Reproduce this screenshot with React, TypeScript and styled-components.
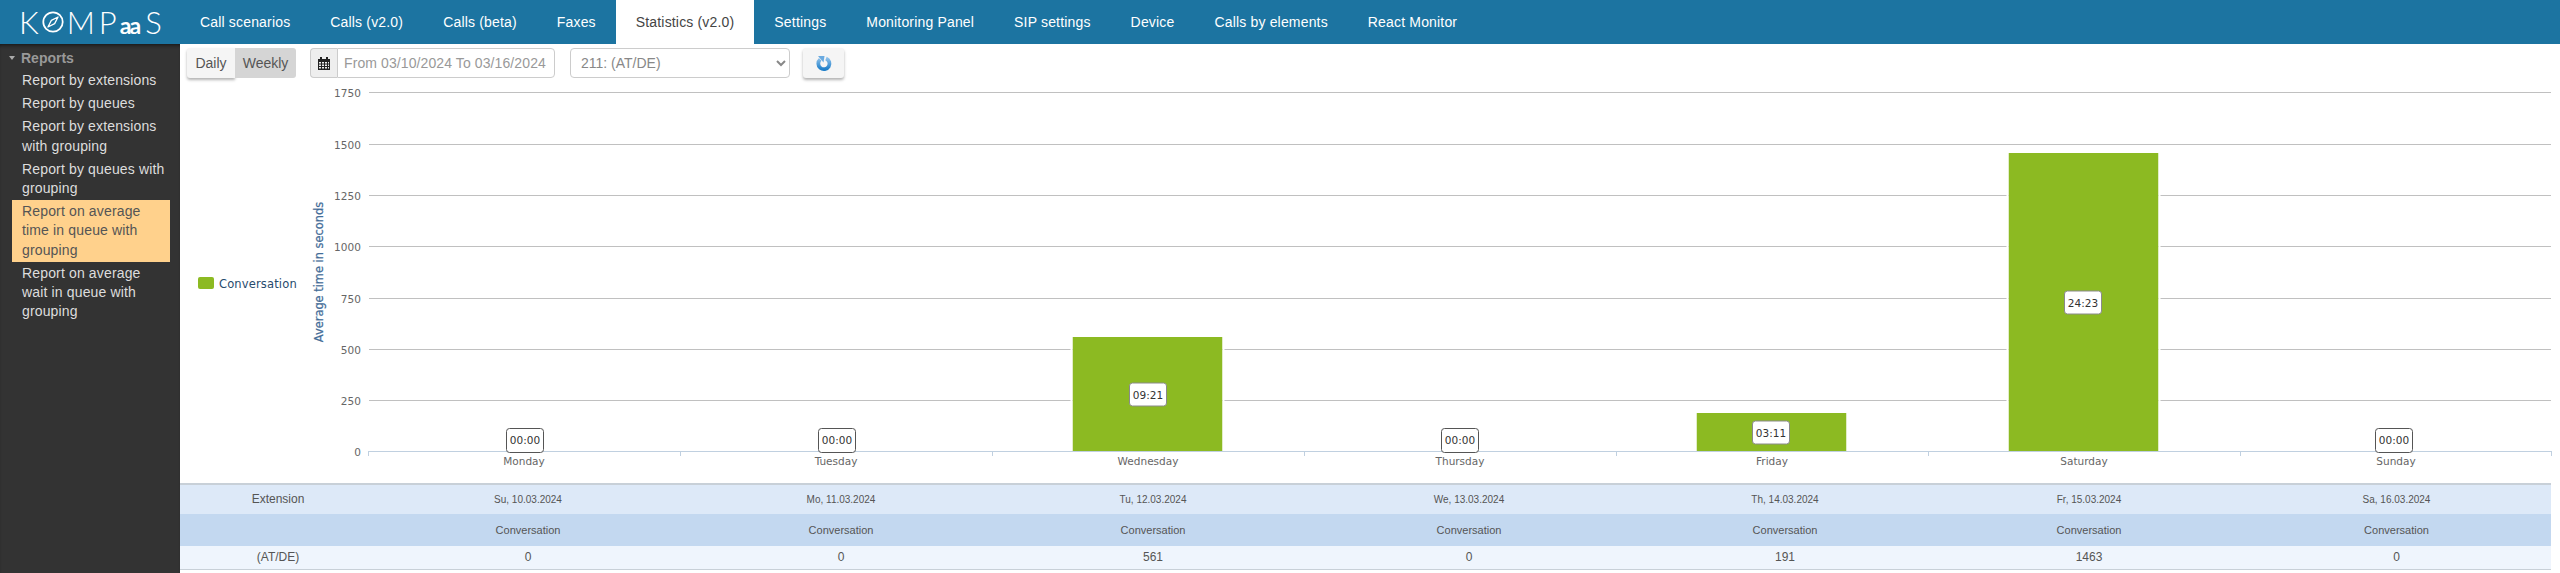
import React from 'react';
import styled, { createGlobalStyle } from 'styled-components';

const Global = createGlobalStyle`
  html, body { margin: 0; padding: 0; height: 100%; background: #fff; overflow: hidden; }
  #root { height: 100%; }
  * { box-sizing: border-box; }
`;

const Page = styled.div`
  display: flex; flex-direction: column; height: 573px; width: 2560px;
  font-family: "Liberation Sans", Arial, sans-serif; font-size: 14px; color: #333;
`;
const Header = styled.header`
  display: flex; height: 44px; flex: none; background: #1c74a1;
`;
const Logo = styled.div`
  width: 180px; flex: none; display: flex; align-items: center; padding-left: 19px;
  font-family: Lato, sans-serif; font-weight: 300; font-size: 31px; color: #fff; line-height: 1;
`;
const LogoLetter = styled.span<{ $gap?: number }>`
  margin-left: ${p => p.$gap ?? 0}px;
`;
const LogoSmall = styled.span<{ $shift?: number }>`
  font-size: 23px; font-weight: 700; margin-left: ${p => p.$shift ?? 0}px; position: relative; top: 3px;
`;
const Nav = styled.nav`display: flex;`;
const Tab = styled.a<{ $active?: boolean }>`
  display: flex; align-items: center; height: 44px; padding: 0 20px;
  font-size: 14px; letter-spacing: .17px;
  color: ${p => (p.$active ? '#444' : '#fff')};
  background: ${p => (p.$active ? '#fff' : 'transparent')};
`;
const Body = styled.div`display: flex; flex: 1; min-height: 0;`;
const Sidebar = styled.aside`
  width: 180px; flex: none; background: #333; padding: 2px 10px 0 12px;
  box-shadow: inset 0 4px 4px -3px #111;
`;
const TreeHead = styled.div`
  display: flex; align-items: center; height: 23px; margin-left: -3px; gap: 6px;
  font-weight: 700; color: #999;
`;
const Caret = styled.span`
  width: 0; height: 0; border-left: 3px solid transparent; border-right: 3px solid transparent;
  border-top: 4px solid #aaa;
`;
const TreeItem = styled.div<{ $active?: boolean }>`
  padding: 2px 2px 2px 10px; line-height: 19.2px; font-size: 14px; letter-spacing: .15px;
  color: ${p => (p.$active ? '#555' : '#ddd')};
  background: ${p => (p.$active ? '#ffd18c' : 'transparent')};
`;
const Main = styled.main`flex: 1; display: flex; flex-direction: column; min-width: 0;`;
const Toolbar = styled.div`
  display: flex; align-items: flex-start; height: 34px; flex: none; padding: 4px 0 0 7px;
`;
const Toggle = styled.button<{ $on?: boolean }>`
  height: 30px; border: 0; padding: 0; font: inherit; color: #555;
  width: ${p => (p.$on ? 61 : 48)}px;
  background: ${p => (p.$on ? '#d5d5d5' : '#f5f5f5')};
  border-radius: ${p => (p.$on ? '0 3px 3px 0' : '3px 0 0 3px')};
  box-shadow: ${p => (p.$on ? 'none' : '0 2px 3px rgba(0,0,0,.3)')};
`;
const DateGroup = styled.div`display: flex; margin-left: 14px;`;
const Addon = styled.span`
  width: 27px; height: 30px; display: flex; align-items: center; justify-content: center;
  background: #eee; border: 1px solid #ccc; border-right: 0; border-radius: 4px 0 0 4px;
`;
const DateInput = styled.input`
  width: 218px; height: 30px; padding: 0 6px; border: 1px solid #ccc; border-radius: 0 4px 4px 0;
  font: 14px "Liberation Sans", Arial, sans-serif; letter-spacing: .1px; outline: none; color: #999;
`;
const Select = styled.select`
  margin-left: 15px; width: 220px; height: 30px; padding: 0 6px; background: #fff;
  border: 1px solid #ccc; border-radius: 4px; color: #888;
  font: 14px "Liberation Sans", Arial, sans-serif;
`;
const RefreshBtn = styled.button`
  margin-left: 13px; width: 41px; height: 30px; border: 0; padding: 0; border-radius: 3px;
  background: #f5f5f5; box-shadow: 0 2px 3px rgba(0,0,0,.3);
  display: flex; align-items: center; justify-content: center;
`;
const Chart = styled.svg`display: block; width: 2380px; height: 405px; flex: none;`;
const AxisNum = styled.text`
  font: 10.5px "DejaVu Sans", Verdana, sans-serif; fill: #666; text-anchor: end; letter-spacing: .1px;
`;
const CatText = styled.text`
  font: 10.5px "DejaVu Sans", Verdana, sans-serif; fill: #666; text-anchor: middle;
`;
const AxisTitle = styled.text`
  font: 400 11.4px "DejaVu Sans", Verdana, sans-serif; fill: #3f6a96; text-anchor: middle;
  stroke: #4d759e; stroke-width: .25px;
`;
const LegendText = styled.text`
  font: 11.5px "DejaVu Sans", Verdana, sans-serif; fill: #274b6d; letter-spacing: .15px;
`;
const ValueText = styled.text`
  font: 10.5px "DejaVu Sans", Verdana, sans-serif; fill: #333; text-anchor: middle;
`;
const Table = styled.table`
  width: 2371px; border-collapse: collapse; table-layout: fixed; flex: none;
  border-top: 2px solid #c8d0d8; border-bottom: 1px solid #c8d0d8;
`;
const Row = styled.tr<{ $bg: string; $h: number }>`
  background: ${p => p.$bg}; height: ${p => p.$h}px;
`;
const Cell = styled.td<{ $size: number; $lift?: number }>`
  padding: 0 0 ${p => p.$lift ?? 0}px; text-align: center; color: #555; font-size: ${p => p.$size}px;
`;

const tabs = ['Call scenarios', 'Calls (v2.0)', 'Calls (beta)', 'Faxes', 'Statistics (v2.0)', 'Settings', 'Monitoring Panel', 'SIP settings', 'Device', 'Calls by elements', 'React Monitor'];
const reports = ['Report by extensions', 'Report by queues', 'Report by extensions with grouping', 'Report by queues with grouping', 'Report on average time in queue with grouping', 'Report on average wait in queue with grouping'];
const gridY = [92, 144, 195, 246, 298, 349, 400];
const yNums = ['1750', '1500', '1250', '1000', '750', '500', '250'];
const X0 = 368, STEP = 312, AXIS = 451;
const days = [
  { d: 'Monday', top: 0, t: '00:00', date: 'Su, 10.03.2024', v: '0', cx: 525 },
  { d: 'Tuesday', top: 0, t: '00:00', date: 'Mo, 11.03.2024', v: '0', cx: 837 },
  { d: 'Wednesday', top: 337, t: '09:21', date: 'Tu, 12.03.2024', v: '561', cx: 1148 },
  { d: 'Thursday', top: 0, t: '00:00', date: 'We, 13.03.2024', v: '0', cx: 1460 },
  { d: 'Friday', top: 413, t: '03:11', date: 'Th, 14.03.2024', v: '191', cx: 1771 },
  { d: 'Saturday', top: 153, t: '24:23', date: 'Fr, 15.03.2024', v: '1463', cx: 2083 },
  { d: 'Sunday', top: 0, t: '00:00', date: 'Sa, 16.03.2024', v: '0', cx: 2394 },
];
const colW = [196, 304, 322, 302, 330, 302, 306, 309];

const Compass = () => (
  <svg width="22" height="22" viewBox="0 0 24 24" fill="none" style={{ marginLeft: 3 }}>
    <circle cx="12" cy="12" r="10.6" stroke="#fff" strokeWidth="1.9" />
    <path d="M17.5 6.5 L13.8 13.8 L6.5 17.5 L10.2 10.2 Z" stroke="#fff" strokeWidth="1.4" strokeLinejoin="round" />
  </svg>
);
const CalendarIcon = () => (
  <svg width="12" height="13" viewBox="0 0 12 13">
    <path fill="#222" d="M0 2h2V0h2v2h4V0h2v2h2v11H0z" />
    <path fill="#eee" d="M1 5h2v1.5H1zM4 5h2v1.5H4zM7 5h2v1.5H7zM10 5h1v1.5h-1zM1 7.5h2V9H1zM4 7.5h2V9H4zM7 7.5h2V9H7zM10 7.5h1V9h-1zM1 10h2v1.5H1zM4 10h2v1.5H4zM7 10h2v1.5H7zM10 10h1v1.5h-1z" />
  </svg>
);
const RefreshIcon = () => (
  <svg width="18" height="18" viewBox="0 0 18 18">
    <defs>
      <linearGradient id="rf" x1="0" y1="0" x2="0" y2="1">
        <stop offset="0" stopColor="#8cc0ea" />
        <stop offset="1" stopColor="#1f7fc9" />
      </linearGradient>
    </defs>
    <path fill="none" stroke="url(#rf)" strokeWidth="3.8" d="M11 4.4 A5.6 5.6 0 1 1 5.2 5.4" />
    <path fill="#6aaae0" d="M3 2 L9.5 2 L8.5 8.5 Z" />
  </svg>
);

export default function App() {
  return (
    <Page>
      <Global />
      <Header>
        <Logo>
          <LogoLetter>K</LogoLetter>
          <Compass />
          <LogoLetter $gap={3}>M</LogoLetter>
          <LogoLetter $gap={4}>P</LogoLetter>
          <LogoSmall $shift={3}>a</LogoSmall>
          <LogoSmall $shift={-2}>a</LogoSmall>
          <LogoLetter $gap={4}>S</LogoLetter>
        </Logo>
        <Nav>
          {tabs.map(t => (
            <Tab key={t} $active={t === 'Statistics (v2.0)'}>{t}</Tab>
          ))}
        </Nav>
      </Header>
      <Body>
        <Sidebar>
          <TreeHead><Caret />Reports</TreeHead>
          {reports.map((r, i) => (
            <TreeItem key={r} $active={i === 4}>{r}</TreeItem>
          ))}
        </Sidebar>
        <Main>
          <Toolbar>
            <Toggle>Daily</Toggle>
            <Toggle $on>Weekly</Toggle>
            <DateGroup>
              <Addon><CalendarIcon /></Addon>
              <DateInput readOnly value="From 03/10/2024 To 03/16/2024" />
            </DateGroup>
            <Select defaultValue="211"><option value="211">211: (AT/DE)</option></Select>
            <RefreshBtn><RefreshIcon /></RefreshBtn>
          </Toolbar>
          <Chart viewBox="180 78 2380 405">
            {gridY.map((y, i) => (
              <g key={y}>
                <line x1={369} x2={2551} y1={y + 0.5} y2={y + 0.5} stroke="#c0c0c0" />
                <AxisNum x={361} y={y + 4.5}>{yNums[i]}</AxisNum>
              </g>
            ))}
            <line x1={368} x2={2551} y1={AXIS + 0.5} y2={AXIS + 0.5} stroke="#c0d0e0" />
            <AxisNum x={361} y={AXIS + 4.5}>0</AxisNum>
            {Array.from({ length: 8 }, (_, i) => {
              const x = Math.min(X0 + STEP * i, 2551) + 0.5;
              return <line key={i} x1={x} x2={x} y1={AXIS} y2={AXIS + 5} stroke="#c0d0e0" />;
            })}
            <AxisTitle transform="translate(323 272) rotate(-90)">Average time in seconds</AxisTitle>
            <rect x={198} y={277} width={16} height={12} rx={2} fill="#8cba22" />
            <LegendText x={219} y={288}>Conversation</LegendText>
            {days.map((d, i) => {
              const c = X0 + STEP * i + STEP / 2;
              const hasBar = d.top > 0;
              const boxY = hasBar ? (d.top + AXIS) / 2 - 11.5 : 428;
              const boxH = hasBar ? 23 : 24;
              return (
                <g key={d.d}>
                  {hasBar && (
                    <rect x={c - 75.5} y={d.top} width={150} height={AXIS - d.top} fill="#8cba22" />
                  )}
                  {hasBar && <line x1={c - 76.5} x2={c - 76.5} y1={d.top} y2={AXIS} stroke="#fff" strokeWidth={2} />}
                  {hasBar && <line x1={c + 75.5} x2={c + 75.5} y1={d.top} y2={AXIS} stroke="#fff" strokeWidth={2} />}
                  <rect x={d.cx - 18.5} y={boxY + 0.5} width={37} height={boxH} rx={3} fill="#fff" stroke={hasBar ? '#8a8a8a' : '#555'} />
                  <ValueText x={d.cx} y={boxY + 16}>{d.t}</ValueText>
                  <CatText x={c} y={465}>{d.d}</CatText>
                </g>
              );
            })}
          </Chart>
          <Table>
            <colgroup>
              {colW.map((w, i) => <col key={i} width={w} />)}
            </colgroup>
            <tbody>
              <Row $bg="#dde9f8" $h={30}>
                <Cell $size={12} $lift={2}>Extension</Cell>
                {days.map(d => <Cell key={d.d} $size={10}>{d.date}</Cell>)}
              </Row>
              <Row $bg="#c3d8f0" $h={32}>
                <Cell $size={11} />
                {days.map(d => <Cell key={d.d} $size={11}>Conversation</Cell>)}
              </Row>
              <Row $bg="#eff5fd" $h={23}>
                <Cell $size={12}>(AT/DE)</Cell>
                {days.map(d => <Cell key={d.d} $size={12}>{d.v}</Cell>)}
              </Row>
            </tbody>
          </Table>
        </Main>
      </Body>
    </Page>
  );
}
